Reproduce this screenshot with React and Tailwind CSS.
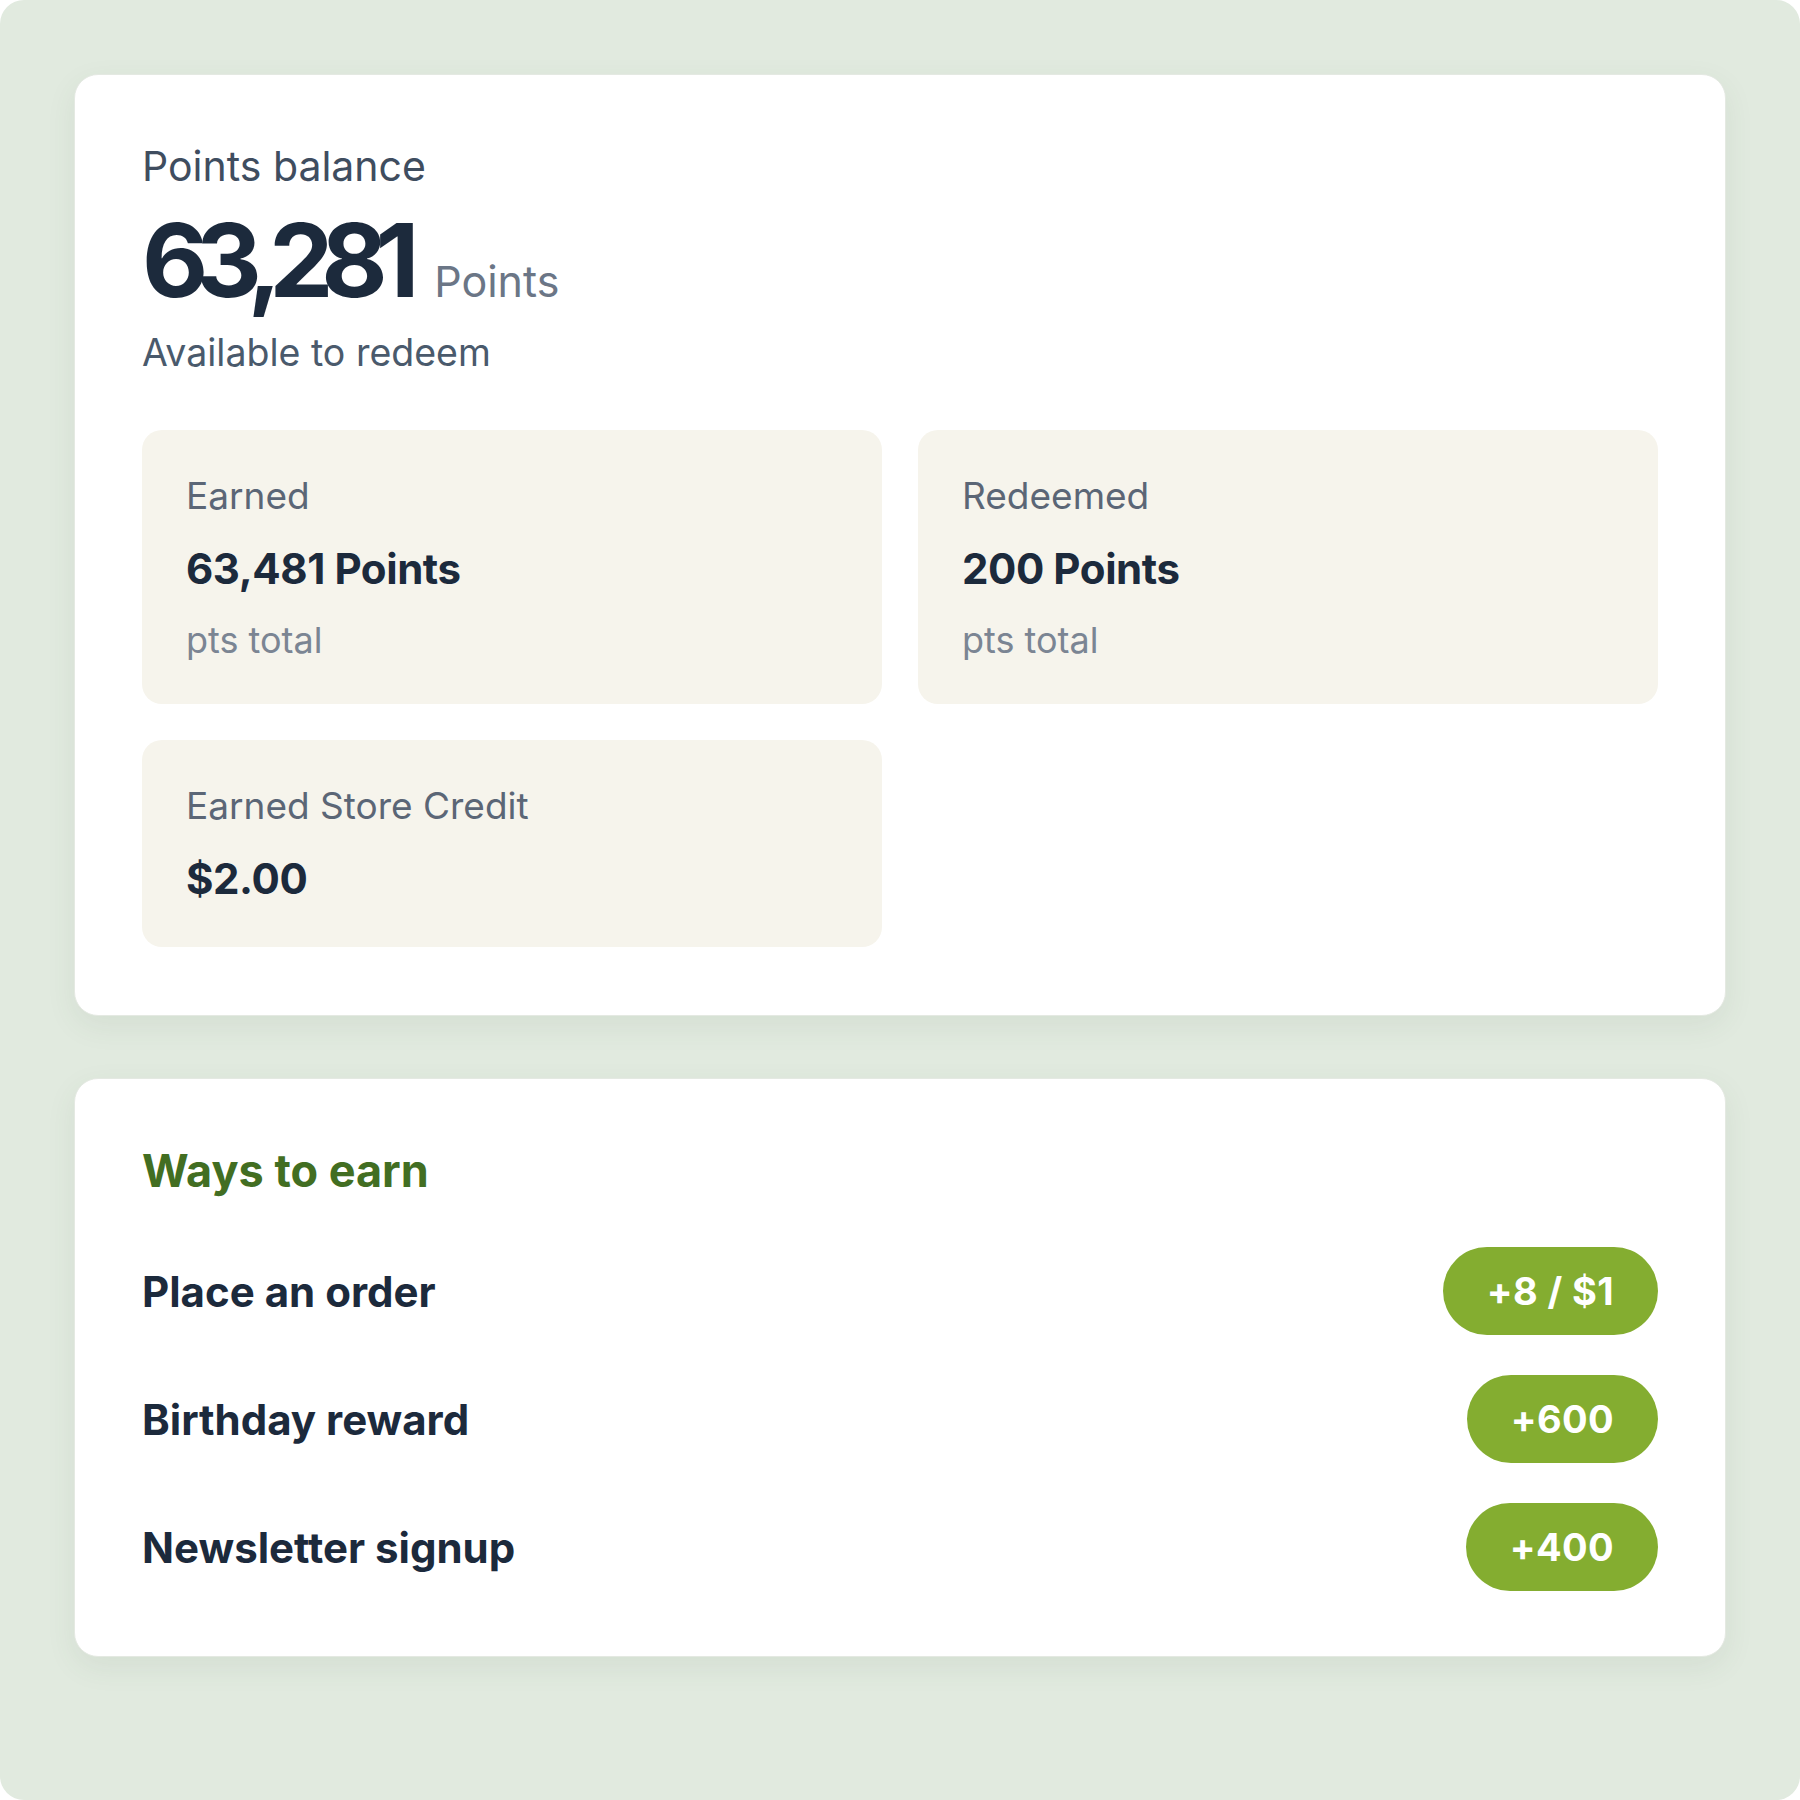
import React from 'react';

const stats = [
  { label: 'Earned', value: '63,481 Points', note: 'pts total' },
  { label: 'Redeemed', value: '200 Points', note: 'pts total' },
  { label: 'Earned Store Credit', value: '$2.00' },
];

const ways = [
  { name: 'Place an order', reward: '+8 / $1' },
  { name: 'Birthday reward', reward: '+600' },
  { name: 'Newsletter signup', reward: '+400' },
];

const StatTile = ({ label, value, note }) => (
  <div className="rounded-[20px] bg-[#f6f4ec] px-[44px] pt-[44px] pb-[42px]">
    <p className="text-[37px] leading-[44px] text-[#5b6676]">{label}</p>
    <p className="mt-[25px] text-[42px] leading-[52px] font-bold tracking-[-0.01em] text-[#1c2a3c]">{value}</p>
    {note && <p className="mt-[23px] text-[36px] leading-[44px] text-[#7b8593]">{note}</p>}
  </div>
);

const App = () => {
  return (
    <div className="w-[1800px] h-[1800px] bg-white font-['Inter','Liberation_Sans',sans-serif]">
      <div className="h-full rounded-[24px] bg-[#e1eadf] px-[74px] pt-[74px]">
        {/* balance card */}
        <div className="rounded-[24px] bg-white border border-[#e4e9e2] px-[67px] pt-[67px] pb-[68px] shadow-[0_10px_30px_rgba(70,90,70,0.08)]">
          <p className="text-[41px] leading-[48px] text-[#3f4d5f]">Points balance</p>
          <div className="mt-[18px] flex items-baseline">
            <span className="text-[102px] leading-[104px] font-bold tracking-[-0.12em] text-[#1c2a3c]">63,281</span>
            <span className="ml-[27px] text-[43px] leading-[52px] text-[#6b7686]">Points</span>
          </div>
          <p className="mt-[19px] text-[37.5px] leading-[44px] text-[#4a5a6c]">Available to redeem</p>

          <div className="mt-[55px] grid grid-cols-2 gap-[36px]">
            {stats.map((s) => (
              <StatTile key={s.label} {...s} />
            ))}
          </div>
        </div>

        {/* ways to earn */}
        <div className="mt-[62px] rounded-[24px] bg-white border border-[#e4e9e2] px-[67px] pt-[66px] pb-[65px] shadow-[0_10px_30px_rgba(70,90,70,0.08)]">
          <h2 className="text-[45px] leading-[52px] font-bold text-[#426e22]">Ways to earn</h2>
          <div className="mt-[50px] flex flex-col gap-[40px]">
            {ways.map((w) => (
              <div key={w.name} className="flex items-center justify-between">
                <span className="text-[42px] font-bold text-[#1c2a3c]">{w.name}</span>
                <span className="h-[88px] flex items-center rounded-full bg-[#84ad30] px-[44px] text-[38px] font-bold tracking-[0.01em] text-white">
                  {w.reward}
                </span>
              </div>
            ))}
          </div>
        </div>
      </div>
    </div>
  );
};

export default App;
